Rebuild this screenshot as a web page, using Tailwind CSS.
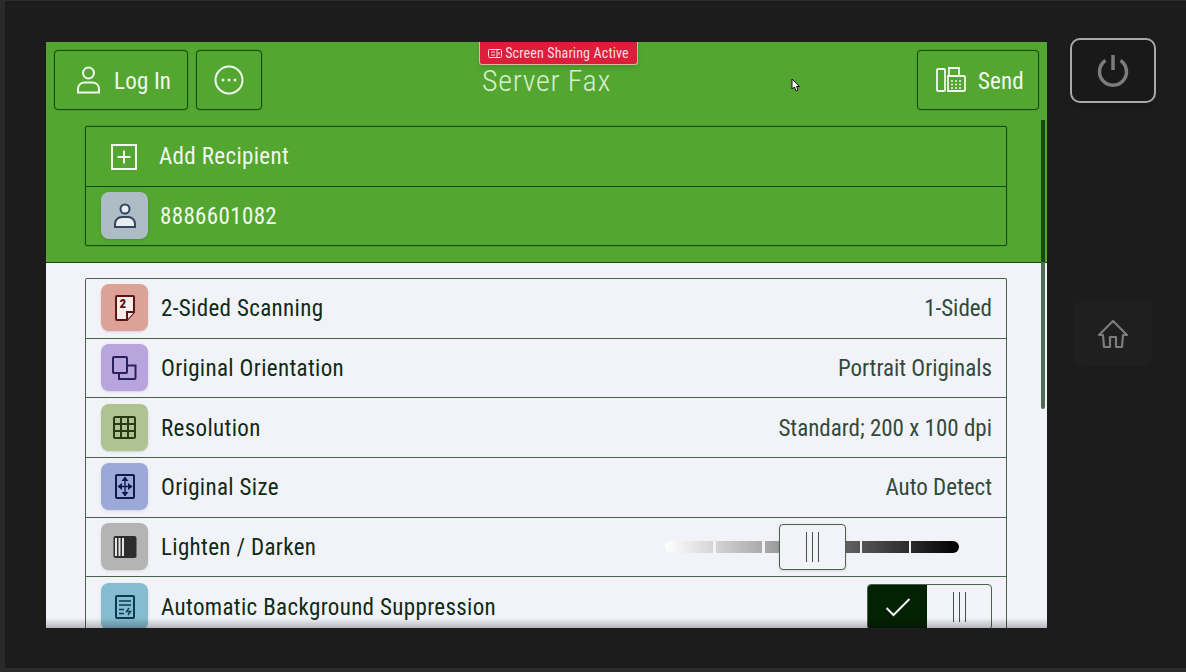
<!doctype html>
<html><head><meta charset="utf-8"><script src="https://cdn.jsdelivr.net/npm/@tailwindcss/browser@4"></script></head>
<body class="m-0">
<div class="w-[1186px] h-[672px] overflow-hidden bg-[#1c1c1c] border-l-[5px] border-t border-b-[4px] border-[#2a2a2a] pl-[41px] pt-[41px] flex font-['Roboto',sans-serif] [font-stretch:85%] box-border">
  <main class="relative w-[1001px] h-[586px] overflow-hidden bg-[#f2f3f9] flex flex-col shrink-0">
    <header class="h-[221px] shrink-0 bg-[#53a630] border-b border-[#154a0c] text-[#f1f8ee]">
      <div class="grid grid-cols-[1fr_auto_1fr] items-center h-[60px] mt-[8px] px-[8px]">
        <div class="flex gap-[8px]">
          <div class="w-[134px] h-[60px] border border-[#154a0c] shadow-[0_0_1px_#154a0c] rounded-[4px] flex items-center pl-[21px] gap-[13px] text-[23px] tracking-[0.2px]">
            <svg width="25" height="28" viewBox="0 0 25 28" fill="none" stroke="#f1f8ee" stroke-width="2"><circle cx="12.500" cy="7" r="5.500"/><path d="M2 26.500V23c0-4 3-6.500 7-6.500h7c4 0 7 2.500 7 6.500v3.500z"/></svg>
            <span class="pt-[4px]">Log In</span>
          </div>
          <div class="w-[66px] h-[60px] border border-[#154a0c] shadow-[0_0_1px_#154a0c] rounded-[4px] flex items-center justify-center">
            <svg width="30" height="30" viewBox="0 0 30 30" fill="none" stroke="#f1f8ee" stroke-width="2"><circle cx="15" cy="15" r="13.5"/><circle cx="9" cy="15" r="1.5" fill="#f1f8ee" stroke="none"/><circle cx="15" cy="15" r="1.5" fill="#f1f8ee" stroke="none"/><circle cx="21" cy="15" r="1.5" fill="#f1f8ee" stroke="none"/></svg>
          </div>
        </div>
        <h1 class="text-[30px] font-light text-center text-[#d9efcf] tracking-[0.7px] pt-[1px]">Server Fax</h1>
        <div class="flex justify-end">
          <div class="w-[122px] h-[60px] border border-[#154a0c] shadow-[0_0_1px_#154a0c] rounded-[4px] flex items-center pl-[18px] gap-[12px] text-[23px] tracking-[0.1px]">
            <svg width="30" height="26" viewBox="0 0 30 26" fill="none" stroke="#f1f8ee" stroke-width="1.8"><rect x="1" y="2" width="8" height="22" rx="1"/><path d="M12 24h16a1 1 0 0 0 1-1V10a1 1 0 0 0-1-1H12zM13 9V1h10v8"/><path d="M15 14h2M19 14h2M23 14h2M15 17.5h2M19 17.5h2M23 17.5h2M15 21h2M19 21h2M23 21h2" stroke-width="1.4"/></svg>
            <span class="pt-[4px]">Send</span>
          </div>
        </div>
      </div>
      <div class="mt-[16px] mx-[39px] w-[922px] h-[120px] border border-[#154a0c] shadow-[0_0_1px_#154a0c] rounded-[2px] text-[23px] tracking-[0.35px]">
        <div class="h-[60px] border-b border-[#154a0c] flex items-center pl-[25px] gap-[22px]">
          <svg width="26" height="26" viewBox="0 0 26 26" fill="none" stroke="#f1f8ee" stroke-width="2"><rect x="1" y="1" width="24" height="24"/><path d="M13 6.5v13M6.5 13h13"/></svg>
          <span class="pt-[2px]">Add Recipient</span>
        </div>
        <div class="h-[58px] flex items-center pl-[15px] gap-[12px]">
          <div class="w-[47px] h-[47px] -mt-[1px] rounded-[8px] bg-[#aebcc6] shadow-sm flex items-center justify-center">
            <svg width="22" height="26" viewBox="0 0 22 26" fill="none" stroke="#33475a" stroke-width="2"><circle cx="11" cy="6" r="4.5" fill="#e8edf2"/><path d="M1 24v-3c0-4 3-7 7-7h6c4 0 7 3 7 7v3z" fill="#e8edf2"/></svg>
          </div>
          <span class="pt-[2px]">8886601082</span>
        </div>
      </div>
    </header>
    <section class="flex-1 overflow-hidden pt-[15px] pl-[39px] text-[#0f2a15] text-[23px] tracking-[0.35px]">
      <div class="w-[922px] border-x border-t border-[#48624c] rounded-t-[2px]">
        <div class="h-[59.7px] border-b border-[#48624c] flex items-center pl-[15px] pr-[14px]">
          <div class="w-[47px] h-[47px] -mt-[1px] mr-[13px] rounded-[8px] bg-[#dda297] shadow-sm flex items-center justify-center">
            <svg width="20" height="26" viewBox="0 0 20 26" fill="none" stroke="#5e1414" stroke-width="2"><path d="M12 25H2a1 1 0 0 1-1-1V2a1 1 0 0 1 1-1h16a1 1 0 0 1 1 1v15z" fill="#f7eeec"/><path d="M12 25v-8h7" fill="#f5ecea"/><text x="4.500" y="13" font-size="13" font-weight="900" fill="#5e1414" stroke="none" font-family="Roboto">2</text></svg>
          </div>
          <span class="flex-1 pt-[2px]">2-Sided Scanning</span><span class="pt-[2px] tracking-[0px] text-[#33493a]">1-Sided</span>
        </div>
        <div class="h-[59.7px] border-b border-[#48624c] flex items-center pl-[15px] pr-[14px]">
          <div class="w-[47px] h-[47px] -mt-[1px] mr-[13px] rounded-[8px] bg-[#b9a5dd] shadow-sm flex items-center justify-center">
            <svg width="25" height="24" viewBox="0 0 25 24" fill="none" stroke="#29205e" stroke-width="2"><rect x="1" y="1" width="14" height="16" rx="1"/><path d="M15 9.500h8.500V22a1 1 0 0 1-1 1H7v-6"/></svg>
          </div>
          <span class="flex-1 pt-[2px]">Original Orientation</span><span class="pt-[2px] tracking-[0px] text-[#33493a]">Portrait Originals</span>
        </div>
        <div class="h-[59.7px] border-b border-[#48624c] flex items-center pl-[15px] pr-[14px]">
          <div class="w-[47px] h-[47px] mr-[13px] rounded-[8px] bg-[#afc292] shadow-sm flex items-center justify-center">
            <svg width="23" height="23" viewBox="0 0 23 23" fill="none" stroke="#273c12" stroke-width="2"><rect x="1" y="1" width="21" height="21" rx="1.500"/><path d="M8 1v21M15 1v21M1 8h21M1 15h21"/></svg>
          </div>
          <span class="flex-1 pt-[3px]">Resolution</span><span class="pt-[3px] tracking-[0px] text-[#33493a]">Standard; 200 x 100 dpi</span>
        </div>
        <div class="h-[59.7px] border-b border-[#48624c] flex items-center pl-[15px] pr-[14px]">
          <div class="w-[47px] h-[47px] -mt-[1px] mr-[13px] rounded-[8px] bg-[#9ca8d8] shadow-sm flex items-center justify-center">
            <svg width="20" height="25" viewBox="0 0 20 25" fill="none" stroke="#10194e" stroke-width="2"><rect x="1" y="1" width="18" height="23" rx="1"/><path d="M10 3v19M3 12.500h14" stroke-width="1.400"/><path d="M10 2.500l-3.500 4.500h7zM10 22.500l-3.500-4.500h7zM2.500 12.500l4.500-3.500v7zM17.500 12.500l-4.500-3.500v7z" fill="#10194e" stroke="none"/></svg>
          </div>
          <span class="flex-1 pt-[2px]">Original Size</span><span class="pt-[2px] tracking-[0px] text-[#33493a]">Auto Detect</span>
        </div>
        <div class="h-[59.7px] border-b border-[#48624c] flex items-center pl-[15px] pr-[15px]">
          <div class="w-[47px] h-[47px] -mt-[1px] mr-[13px] rounded-[8px] bg-[#b5b4b5] shadow-sm flex items-center justify-center">
            <svg width="24" height="24" viewBox="0 0 24 24"><rect x="0.500" y="1" width="23" height="22" rx="2" fill="#2d2d2d"/><path d="M2 3h2v18H2zM5.500 3h2v18h-2zM9 3h2v18H9z" fill="#e4e4e4"/></svg>
          </div>
          <span class="flex-1 pt-[2px]">Lighten / Darken</span>
          <div class="relative w-[294px] h-[12px] mr-[32px] bg-[linear-gradient(90deg,#fff,#000)] rounded-full">
            <div class="absolute left-[48px] top-0 w-[3px] h-full bg-[#f2f3f9]"></div>
            <div class="absolute left-[97px] top-0 w-[3px] h-full bg-[#f2f3f9]"></div>
            <div class="absolute left-[195px] top-0 w-[2px] h-full bg-[#f2f3f9]"></div>
            <div class="absolute left-[244px] top-0 w-[2px] h-full bg-[#f2f3f9]"></div>
            <div class="absolute left-[114px] top-[-17px] w-[67px] h-[46px] bg-[#f2f3f9] border border-[#48624c] rounded-[4px] shadow-sm flex items-center justify-center gap-[5px]">
              <i class="block w-px h-[30px] bg-[#3f5443]"></i><i class="block w-px h-[30px] bg-[#3f5443]"></i><i class="block w-px h-[30px] bg-[#3f5443]"></i>
            </div>
          </div>
        </div>
        <div class="h-[59.7px] flex items-center pl-[15px] pr-[14px]">
          <div class="w-[47px] h-[47px] -mt-[1px] mr-[13px] rounded-[8px] bg-[#86bcd0] shadow-sm flex items-center justify-center">
            <svg width="20" height="24" viewBox="0 0 20 24" fill="none" stroke="#0c3a4e" stroke-width="2"><rect x="1" y="1" width="18" height="22" rx="1"/><path d="M4 6h12M4 10h12M4 14.500h5M4 18.500h5" stroke-width="1.600"/><path d="M14 13l-2.500 3.500h4L13 20" stroke-width="1.300"/></svg>
          </div>
          <span class="flex-1 pt-[2px]">Automatic Background Suppression</span>
          <div class="w-[125px] h-[46px] -mt-[1px] flex rounded-[4px] overflow-hidden border border-[#48624c]">
            <div class="w-[59px] bg-[#032103] flex items-center justify-center">
              <svg width="26" height="20" viewBox="0 0 26 20" fill="none" stroke="#f2f3f9" stroke-width="2"><path d="M1.500 11l7 7L24.500 2"/></svg>
            </div>
            <div class="flex-1 flex items-center justify-center gap-[5px]">
              <i class="block w-px h-[30px] bg-[#3f5443]"></i><i class="block w-px h-[30px] bg-[#3f5443]"></i><i class="block w-px h-[30px] bg-[#3f5443]"></i>
            </div>
          </div>
        </div>
      </div>
    </section>
    <div class="absolute left-[995px] top-[78px] w-[4px] h-[289px] rounded-b-[2px] bg-[linear-gradient(180deg,#154a0c_0,#154a0c_49%,#4f6b52_49%,#4f6b52_100%)]"></div>
    <div class="absolute left-[433px] top-0 w-[159px] h-[23px] bg-[#dc1e3a] border-x border-b border-[#d9b7a3] rounded-b-[3px] shadow-md flex items-center justify-center gap-[3px] text-[14px] tracking-[0.15px] text-[#f8dfe2]">
      <svg width="14" height="9" viewBox="0 0 14 9" fill="none" stroke="#f8dfe2"><rect x="0.500" y="0.500" width="13" height="8" rx="1"/><path d="M9 .5v8M3 3h4M3 6h4M11 3v3"/></svg>
      <span>Screen Sharing Active</span>
    </div>
    <div class="absolute left-0 right-0 bottom-0 h-[10px] bg-gradient-to-b from-[#00000000] to-[#00000040]"></div>
    <svg class="absolute left-[745px] top-[36px]" width="9" height="14" viewBox="0 0 9 14"><path d="M1 1v10l2.500-2 1.500 4 2-1-1.500-3.500H8.500z" fill="#fff" stroke="#111" stroke-width="1"/></svg>
  </main>
  <aside class="ml-[24px] w-[85px] flex flex-col items-center">
    <div class="mt-[-4px] ml-[-1px] w-[86px] h-[65px] shrink-0 rounded-[10px] border-2 border-[#a8a8a8] bg-[#191919] shadow-md flex items-center justify-center">
      <svg class="mb-[2px]" width="34" height="34" viewBox="0 0 34 34" fill="none" stroke="#7c7c7c" stroke-width="3.500"><path d="M17 2v15"/><path d="M9.500 7.500a13.500 13.500 0 1 0 15 0"/></svg>
    </div>
    <div class="mt-[198px] ml-[-1px] w-[78px] h-[65px] rounded-[8px] bg-[#1f1f1f] flex items-center justify-center">
      <svg width="32" height="30" viewBox="0 0 32 30" fill="none" stroke="#7c7c7c" stroke-width="2.200"><path d="M16 2L2 16h4l1 12h6V18h6v10h6l1-12h4z" stroke-linejoin="round"/></svg>
    </div>
  </aside>
</div>
</body></html>
